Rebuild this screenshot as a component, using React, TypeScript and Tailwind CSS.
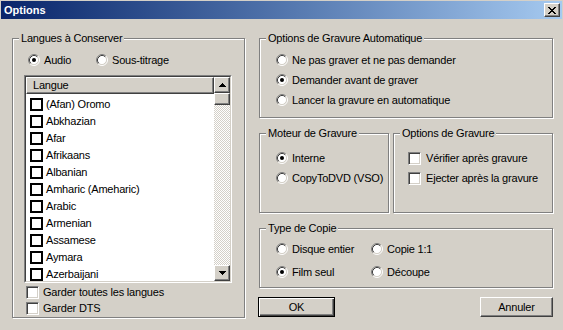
import type { ReactNode } from "react";

const langues = [
  "(Afan) Oromo",
  "Abkhazian",
  "Afar",
  "Afrikaans",
  "Albanian",
  "Amharic (Ameharic)",
  "Arabic",
  "Armenian",
  "Assamese",
  "Aymara",
  "Azerbaijani",
];

const raised =
  "bg-[#d4d0c8] border border-t-white border-l-white border-r-[#404040] border-b-[#404040] shadow-[inset_-1px_-1px_0_#808080]";

const sunkenBox =
  "w-[13px] h-[13px] shrink-0 bg-white border border-t-[#808080] border-l-[#808080] border-r-white border-b-white shadow-[inset_1px_1px_0_#404040,inset_-1px_-1px_0_#d4d0c8]";

// petit dessin au pixel (croix, flèches)
function Pixels({ rows }: { rows: string[] }) {
  return (
    <svg width={rows[0].length} height={rows.length} shapeRendering="crispEdges">
      {rows.flatMap((r, y) =>
        r
          .split("")
          .map((c, x) =>
            c === "x" ? <rect key={`${x}-${y}`} x={x} y={y} width={1} height={1} fill="#000" /> : null
          )
      )}
    </svg>
  );
}

function Radio({ checked }: { checked?: boolean }) {
  return (
    <svg width="12" height="12" viewBox="0 0 12 12" className="shrink-0">
      <circle cx="6" cy="6" r="4.5" fill="#fff" />
      <path d="M2.11 9.89A5.5 5.5 0 0 1 9.89 2.11" fill="none" stroke="#808080" />
      <path d="M9.89 2.11A5.5 5.5 0 0 1 2.11 9.89" fill="none" stroke="#fff" />
      <path d="M2.82 9.18A4.5 4.5 0 0 1 9.18 2.82" fill="none" stroke="#404040" />
      <path d="M9.18 2.82A4.5 4.5 0 0 1 2.82 9.18" fill="none" stroke="#d4d0c8" />
      {checked && <circle cx="6" cy="6" r="2" fill="#000" />}
    </svg>
  );
}

function RadioItem({ label, checked }: { label: string; checked?: boolean }) {
  return (
    <div className="flex items-center gap-[4px] h-[12px]">
      <Radio checked={checked} />
      <span>{label}</span>
    </div>
  );
}

function CheckItem({ label }: { label: string }) {
  return (
    <div className="flex items-center gap-[5px] h-[13px]">
      <div className={sunkenBox} />
      <span>{label}</span>
    </div>
  );
}

function Group({ title, className, children }: { title: string; className?: string; children?: ReactNode }) {
  return (
    <div
      className={`relative border border-[#808080] shadow-[inset_1px_1px_0_#fff,1px_1px_0_#fff] ${className ?? ""}`}
    >
      <span className="absolute -top-[8px] left-[6px] px-[2px] leading-[14px] bg-[#d4d0c8]">{title}</span>
      {children}
    </div>
  );
}

export default function App() {
  return (
    <div className="w-[563px] h-[330px] overflow-hidden bg-[#d4d0c8] text-black text-[11px] leading-[13px] tracking-[-0.2px] font-['Liberation_Sans',Arial,sans-serif]">
      <div className="mx-[1px] mt-[1px] h-[18px] flex items-center pl-[3px] pr-[2px] bg-linear-to-r from-[#0a246a] to-[#a6caf0]">
        <span className="font-bold text-white tracking-normal">Options</span>
        <div className={`ml-auto w-[16px] h-[14px] flex items-center justify-center ${raised}`}>
          <Pixels rows={["xx....xx", ".xx..xx.", "..xxxx..", "...xx...", "..xxxx..", ".xx..xx.", "xx....xx"]} />
        </div>
      </div>

      <div className="flex pl-[12px] pt-[19px]">
        <Group title="Langues à Conserver" className="w-[233px] h-[280px] pl-[11px] pt-[15px]">
          <div className="flex pl-[4px]">
            <div className="w-[68px]">
              <RadioItem label="Audio" checked />
            </div>
            <RadioItem label="Sous-titrage" />
          </div>

          <div className="mt-[9px] w-[208px] h-[208px] border border-t-[#808080] border-l-[#808080] border-r-white border-b-white">
            <div className="h-full flex bg-white border border-t-[#404040] border-l-[#404040] border-r-[#d4d0c8] border-b-[#d4d0c8]">
              <div className="flex-1 flex flex-col overflow-hidden">
                <div className={`h-[17px] shrink-0 flex items-center pl-[6px] ${raised}`}>Langue</div>
                <div className="pt-[2px]">
                  {langues.map((l) => (
                    <div key={l} className="h-[17px] flex items-center gap-[3px] pl-[4px]">
                      <div className="w-[13px] h-[13px] shrink-0 border-2 border-black bg-white" />
                      <span>{l}</span>
                    </div>
                  ))}
                </div>
              </div>
              <div className="w-[16px] flex flex-col">
                <div className={`h-[16px] flex items-center justify-center ${raised}`}>
                  <Pixels rows={["...x...", "..xxx..", ".xxxxx.", "xxxxxxx"]} />
                </div>
                <div className={`h-[12px] ${raised}`} />
                <div className="flex-1 bg-[repeating-conic-gradient(#d4d0c8_0_25%,#fff_0_50%)] bg-size-[2px_2px]" />
                <div className={`h-[16px] flex items-center justify-center ${raised}`}>
                  <Pixels rows={["xxxxxxx", ".xxxxx.", "..xxx..", "...x..."]} />
                </div>
              </div>
            </div>
          </div>

          <div className="mt-[3px] pl-[2px] flex flex-col gap-[3px]">
            <div className="flex items-center gap-[4px] h-[13px]">
              <div className={sunkenBox} />
              <span>Garder toutes les langues</span>
            </div>
            <div className="flex items-center gap-[4px] h-[13px]">
              <div className={sunkenBox} />
              <span>Garder DTS</span>
            </div>
          </div>
        </Group>

        <div className="ml-[14px] w-[294px] flex flex-col">
          <Group title="Options de Gravure Automatique" className="h-[80px] pl-[16px] pt-[15px] flex flex-col gap-[8px]">
            <RadioItem label="Ne pas graver et ne pas demander" />
            <RadioItem label="Demander avant de graver" checked />
            <RadioItem label="Lancer la gravure en automatique" />
          </Group>

          <div className="mt-[15px] flex gap-[4px]">
            <Group title="Moteur de Gravure" className="w-[130px] h-[80px] pl-[16px] pt-[18px] flex flex-col gap-[8px]">
              <RadioItem label="Interne" checked />
              <RadioItem label="CopyToDVD (VSO)" />
            </Group>
            <Group title="Options de Gravure" className="w-[160px] h-[80px] pl-[14px] pt-[18px] flex flex-col gap-[7px]">
              <CheckItem label="Vérifier après gravure" />
              <CheckItem label="Ejecter après la gravure" />
            </Group>
          </div>

          <Group title="Type de Copie" className="mt-[15px] h-[60px] pl-[16px] pt-[14px]">
            <div className="grid grid-cols-[95px_auto] gap-y-[11px]">
              <RadioItem label="Disque entier" />
              <RadioItem label="Copie 1:1" />
              <RadioItem label="Film seul" checked />
              <RadioItem label="Découpe" />
            </div>
          </Group>

          <div className="mt-[9px] flex justify-between">
            <div className="-ml-[1px] w-[77px] h-[20px] flex items-center justify-center bg-[#d4d0c8] border border-black shadow-[inset_1px_1px_0_#fff,inset_-1px_-1px_0_#404040,inset_-2px_-2px_0_#808080]">
              OK
            </div>
            <div className={`w-[73px] h-[20px] flex items-center justify-center ${raised}`}>Annuler</div>
          </div>
        </div>
      </div>
    </div>
  );
}
